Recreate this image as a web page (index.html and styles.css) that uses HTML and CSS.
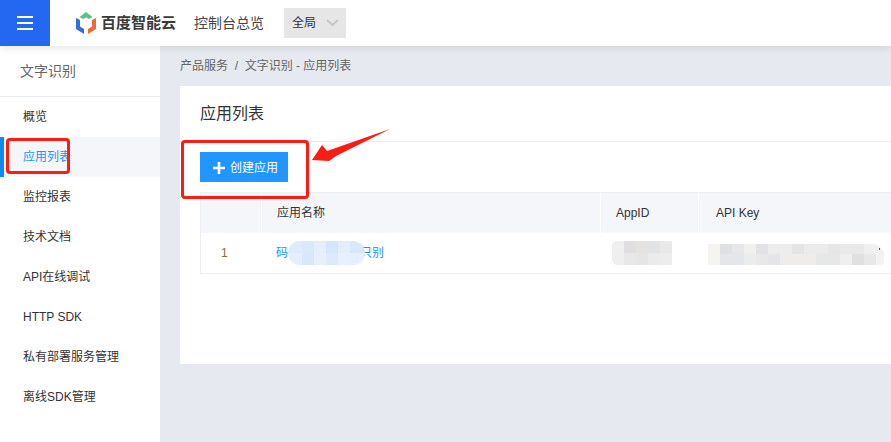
FILE: index.html
```html
<!DOCTYPE html>
<html lang="zh">
<head>
<meta charset="utf-8">
<title>应用列表</title>
<link rel="stylesheet" href="styles.css">
</head>
<body>
<header class="topbar">
  <button class="menu-btn" aria-label="菜单">
    <svg width="18" height="16" viewBox="0 0 18 16"><path d="M1 2h16M1 8h16M1 14h16" stroke="#fff" stroke-width="2"/></svg>
  </button>
  <svg class="logo-mark" width="20" height="22" viewBox="0 0 20 22">
    <path d="M3.500 5 10 0l6.500 5-3.500 2-3-1.500L7 7z" fill="#5fc08a"/>
    <path d="M0 6l4 2v6.500l4 2.500v5L0 17z" fill="#2f6fe0"/>
    <path d="M20 6l-4 2v6.500L12 17v5l8-5z" fill="#ee6a3c"/>
  </svg>
  <span class="brand">百度智能云</span>
  <span class="console">控制台总览</span>
  <div class="region">
    <span>全局</span>
    <svg width="13" height="8" viewBox="0 0 13 8"><path d="M1 1l5.500 5L12 1" fill="none" stroke="#c8c8c8" stroke-width="2.200"/></svg>
  </div>
</header>
<div class="body">
  <aside class="sidebar">
    <div class="side-title">文字识别</div>
    <nav class="side-nav">
      <a class="side-item">概览</a>
      <a class="side-item active">应用列表</a>
      <a class="side-item">监控报表</a>
      <a class="side-item">技术文档</a>
      <a class="side-item">API在线调试</a>
      <a class="side-item">HTTP SDK</a>
      <a class="side-item">私有部署服务管理</a>
      <a class="side-item">离线SDK管理</a>
    </nav>
  </aside>
  <main class="content">
    <div class="crumbs">产品服务&nbsp;&nbsp;/&nbsp;&nbsp;文字识别 - 应用列表</div>
    <section class="card">
      <h1 class="card-title">应用列表</h1>
      <div class="card-body">
        <button class="create-btn">
          <svg width="12" height="12" viewBox="0 0 12 12"><path d="M6 0v12M0 6h12" stroke="#fff" stroke-width="2.600"/></svg>
          <span>创建应用</span>
        </button>
        <div class="table">
          <div class="row head">
            <div class="cell c-idx"></div>
            <div class="cell c-name">应用名称</div>
            <div class="cell c-id">AppID</div>
            <div class="cell c-key">API Key</div>
          </div>
          <div class="row data">
            <div class="cell c-idx idx">1</div>
            <div class="cell c-name link">码<span class="blur-gap"></span>只别</div>
            <div class="cell c-id"></div>
            <div class="cell c-key"></div>
          </div>
        </div>
      </div>
    </section>
  </main>
</div>

<div class="mosaic m-name"></div>
<div class="mosaic m-id"></div>
<div class="mosaic m-key"></div>

<div class="mark mark-side"></div>
<div class="mark mark-btn"></div>
<svg class="arrow" width="80" height="36" viewBox="0 0 80 36"><path d="M79 2 25 29l-7 5-17-1 10-15 5 6z" fill="#fb1c12"/></svg>
</body>
</html>
```
FILE: styles.css
```css
* { box-sizing: border-box; }
html, body { margin: 0; height: 100%; }
body {
  width: 891px; height: 442px; overflow: hidden; position: relative;
  font-family: "Liberation Sans", "Noto Sans CJK SC", sans-serif;
  font-size: 12px; line-height: 16px; color: #333; background: #e6e9ef;
}
.topbar {
  height: 46px; background: #fff; display: flex; align-items: center;
  position: relative; z-index: 2; box-shadow: 0 2px 8px rgba(0,0,0,.1);
}
.menu-btn {
  width: 50px; height: 46px; border: 0; padding: 0; background: #2468f2;
  display: flex; align-items: center; justify-content: center;
}
.logo-mark { margin-left: 26px; }
.brand {
  margin-left: 5px; font-size: 15px; font-weight: 700; color: #3a3a3a; width: 75px;
  white-space: nowrap;
}
.console { margin-left: 18px; font-size: 14px; color: #444; }
.region {
  margin-left: 20px; width: 62px; height: 30px; background: #e6e6e6;
  display: flex; align-items: center; gap: 10px; padding-left: 8px; font-size: 12px; color: #333;
}
.body { display: flex; height: 396px; }
.sidebar { width: 160px; background: #fff; flex: none; }
.side-title {
  height: 51px; padding: 0 20px; display: flex; align-items: center;
  font-size: 14px; color: #666; border-bottom: 1px solid #e8ebf0;
}
.side-item {
  display: flex; align-items: center; height: 40px; padding-left: 23px;
  font-size: 12px; color: #333; white-space: nowrap;
}
.side-nav { display: flex; flex-direction: column; }
.side-item.active { background: #f5f6fa; color: #2196f3; box-shadow: inset 4px 0 0 #108cee; }
.content { flex: 1; padding: 0 0 0 20px; min-width: 0; }
.crumbs { height: 40px; display: flex; align-items: center; font-size: 12px; color: #666; }
.card { background: #fff; height: 278px; width: 711px; }
.card-title {
  margin: 0; height: 56px; padding-left: 20px; display: flex; align-items: center;
  font-size: 16px; line-height: 20px; font-weight: 400; color: #333; border-bottom: 1px solid #e8ebf0;
}
.card-body { padding: 10px 0 0 20px; }
.create-btn {
  width: 88px; height: 30px; border: 0; padding: 1px 0 0 13px; background: #2196ff; color: #fff;
  display: flex; align-items: center; gap: 5px; font: inherit; font-size: 12px;
}
.table { margin-top: 10px; width: 691px; border: 1px solid #eceef2; border-right: 0; }
.row { display: flex; }
.head { height: 40px; background: #f5f6fa; }
.data { height: 40px; background: #fff; }
.cell { display: flex; align-items: center; padding-left: 15px; white-space: nowrap; }
.head .cell + .cell { border-left: 1px solid #fff; }
.c-idx { width: 60px; }
.c-name { width: 339px; }
.c-id { width: 98px; padding-left: 15px; }
.c-key { flex: 1; padding-left: 17px; }
.idx { padding-left: 20px; color: #8a6d3b; }
.link { color: #2196f3; }
.blur-gap { width: 72px; }
.mosaic { position: absolute; z-index: 1; background-repeat: no-repeat; }
.m-name {
  left: 288px; top: 241px; width: 77px; height: 24px; border-radius: 12px;
  background-image:
    linear-gradient(90deg,#dfebfb 0 14px,#dae8fb 14px 26px,#e4eefc 26px 38px,#d5e5fa 38px 50px,#e3edfc 50px 62px,#d9e7fb 62px),
    linear-gradient(90deg,#e4eefc 0 14px,#d8e7fb 14px 26px,#e6effc 26px 38px,#dceafb 38px 50px,#e7f0fd 50px 62px,#e5effd 62px);
  background-size: 100% 12px;
  background-position: 0 0, 0 12px;
}
.m-id {
  left: 612px; top: 241px; width: 60px; height: 24px; border-radius: 5px 0 0 5px;
  background-image:
    linear-gradient(90deg,#efefef 0 12px,#dfdfe1 12px 24px,#e4e3e2 24px 36px,#e2e3e5 36px 48px,#e8e8e8 48px),
    linear-gradient(90deg,#efefef 0 12px,#e8e8e8 12px 24px,#e6e5e4 24px 36px,#ebebeb 36px 48px,#ededed 48px);
  background-size: 100% 12px;
  background-position: 0 0, 0 12px;
}
.m-key {
  left: 708px; top: 244px; width: 176px; height: 21px; border-radius: 0 12px 4px 0;
  background-image:
    linear-gradient(90deg,#f5f4f1 0 12px,#dfe0e4 12px 24px,#e6e7e9 24px 36px,#f0f0ee 36px 48px,#e2e2e6 48px 60px,#ecedec 60px 84px,#e4e4e6 84px 96px,#ecebeb 96px 120px,#e4e6e7 120px 132px,#e9e9e9 132px 156px,#f0f0f0 156px),
    linear-gradient(90deg,#f5f4f1 0 12px,#e5e6e9 12px 36px,#ebedec 36px 48px,#e9e8e7 48px 60px,#e3e5e8 60px 72px,#eeedeb 72px 108px,#e6e8e8 108px 132px,#efefed 132px 144px,#e0e0e1 144px 156px,#e9e8e8 156px 168px,#f2f2f2 168px);
  background-size: 100% 10px, 100% 11px;
  background-position: 0 0, 0 10px;
}
.m-key::after {
  content: ""; position: absolute; left: 171px; top: 4px; width: 1px; height: 2px; background: #3a55a8;
}
.mark { position: absolute; z-index: 3; border: 3px solid #fb1c12; border-radius: 4px; }
.mark-side { left: 6px; top: 138px; width: 64px; height: 36px; }
.mark-btn { left: 181px; top: 140px; width: 128px; height: 59px; }
.arrow { position: absolute; z-index: 3; left: 311px; top: 127px; }
```
